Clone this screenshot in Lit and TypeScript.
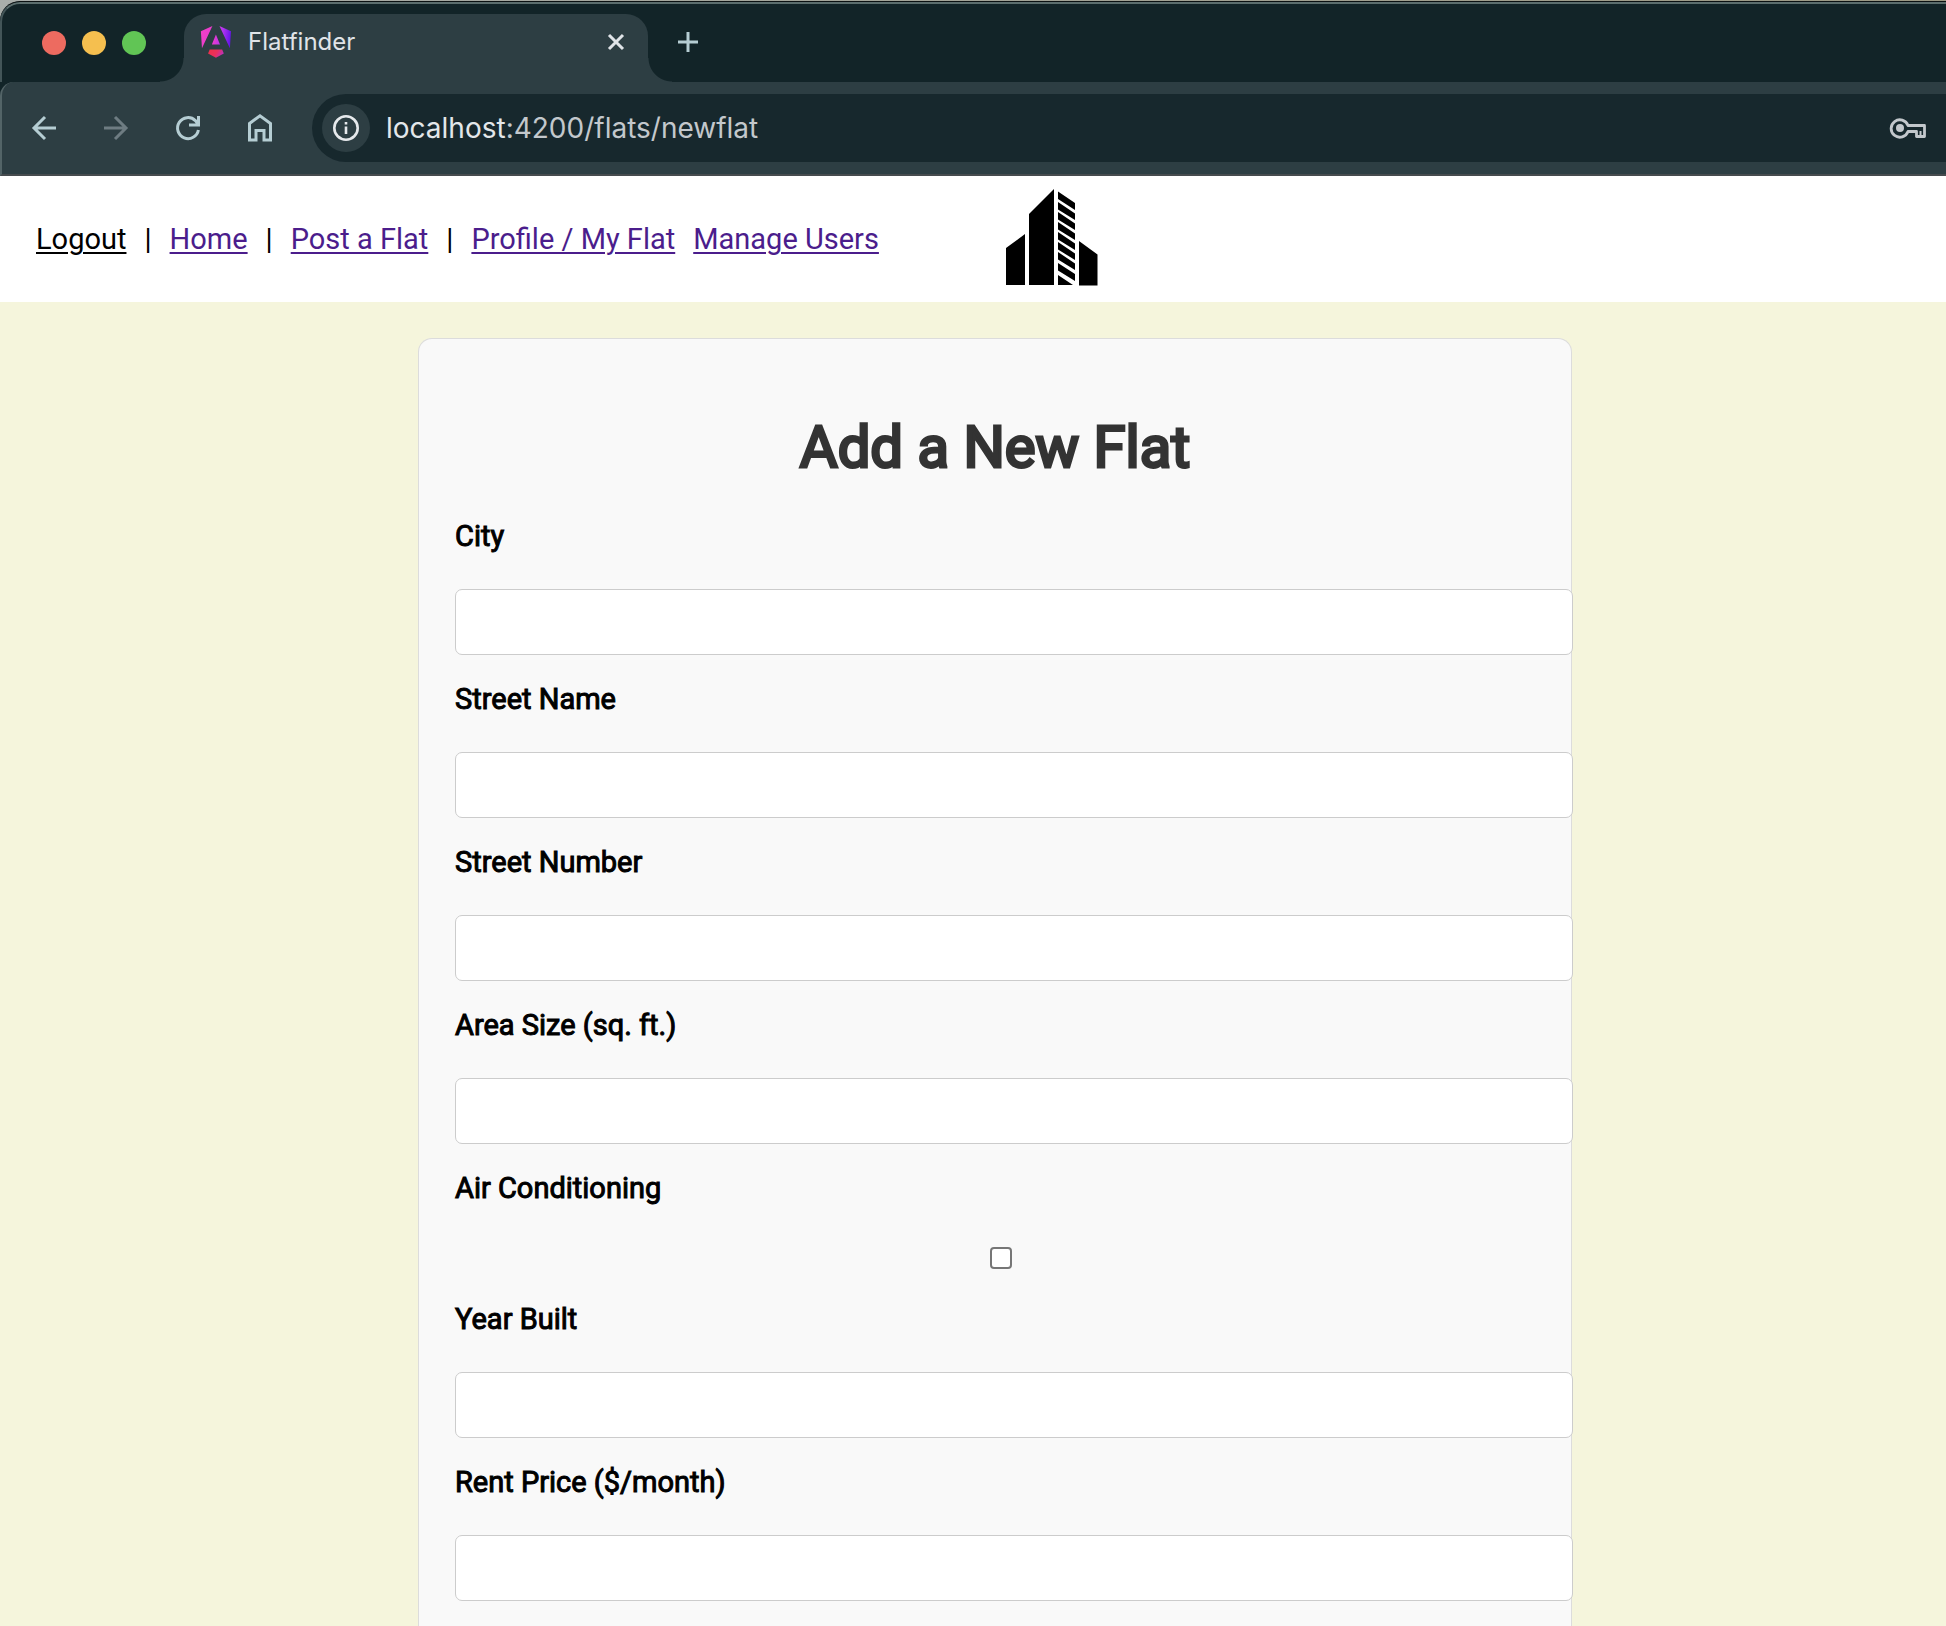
import { LitElement, html, css } from "lit";
import { customElement } from "lit/decorators.js";

@customElement("browser-chrome")
export class BrowserChrome extends LitElement {
  static styles = css`
    :host {
      display: block;
      font-family: Inter, "Liberation Sans", sans-serif;
      background: linear-gradient(90deg, #a9aeab, #9b9883);
      padding-top: 1px;
    }
    button {
      border: 0;
      padding: 0;
      background: none;
      color: inherit;
      font: inherit;
      display: flex;
      align-items: center;
      justify-content: center;
    }
    svg {
      display: block;
    }
    .frame {
      border-top: 1px solid #0b1112;
      border-radius: 20px 0 0 0;
      overflow: hidden;
      background: #122428;
    }
    .strip {
      box-sizing: border-box;
      height: 80px;
      border-top: 2px solid #5c6e6e;
      border-left: 2px solid #435558;
      border-radius: 20px 0 0 0;
      display: flex;
      padding-left: 40px;
    }
    .lights {
      display: flex;
      gap: 16px;
      align-items: center;
      height: 78px;
      margin-right: 38px;
    }
    .light {
      width: 24px;
      height: 24px;
      border-radius: 50%;
    }
    .close {
      background: #ed6b60;
    }
    .minimise {
      background: #f5bf4f;
    }
    .expand {
      background: #61c555;
    }
    .tab {
      position: relative;
      box-sizing: border-box;
      width: 464px;
      margin-top: 10px;
      padding: 0 20px 12px 16px;
      border-radius: 22px 22px 0 0;
      background: #2d3e43;
      color: #e0e4e8;
      display: flex;
      align-items: center;
    }
    .tab::before,
    .tab::after {
      content: "";
      position: absolute;
      bottom: 0;
      width: 24px;
      height: 24px;
    }
    .tab::before {
      right: 100%;
      background: radial-gradient(circle at 0 0, transparent 23px, #2d3e43 24px);
    }
    .tab::after {
      left: 100%;
      background: radial-gradient(circle at 100% 0, transparent 23px, #2d3e43 24px);
    }
    .title {
      flex: 1;
      font-size: 24px;
      line-height: 32px;
      margin-left: 16px;
    }
    .new-tab {
      width: 48px;
      height: 76px;
      margin-left: 16px;
      color: #b5cdd3;
    }
    .toolbar {
      box-sizing: border-box;
      height: 94px;
      display: flex;
      align-items: center;
      gap: 24px;
      background: #2d3e43;
      border-left: 2px solid #536467;
      border-bottom: 2px solid #464b4e;
      border-radius: 14px 0 0 0;
      padding-left: 18px;
      color: #b5cdd3;
    }
    .tool {
      width: 48px;
      height: 48px;
    }
    .muted {
      color: #6e7c82;
    }
    .address {
      flex: 1;
      box-sizing: border-box;
      height: 68px;
      margin-left: 4px;
      padding: 0 18px 0 10px;
      border-radius: 34px 0 0 34px;
      background: #17282d;
      display: flex;
      align-items: center;
      color: #c3c8cc;
    }
    .info {
      width: 48px;
      height: 48px;
      border-radius: 50%;
      background: #2d3e43;
      color: #e6e9ec;
    }
    .url {
      flex: 1;
      margin-left: 16px;
      font-size: 28px;
      line-height: 36px;
    }
    .host {
      color: #e3e7ea;
    }
  `;

  render() {
    return html`
      <div class="frame">
        <div class="strip">
          <div class="lights">
            <button class="light close" aria-label="Close window"></button>
            <button class="light minimise" aria-label="Minimise window"></button>
            <button class="light expand" aria-label="Expand window"></button>
          </div>
          <div class="tab">
            <svg width="32" height="32" viewBox="0 0 223 236" aria-hidden="true">
              <defs>
                <linearGradient id="a" x1="0" y1="0.3" x2="1" y2="0.4">
                  <stop offset="0" stop-color="#f040c8" />
                  <stop offset="0.45" stop-color="#e83ad0" />
                  <stop offset="0.7" stop-color="#b636ef" />
                  <stop offset="1" stop-color="#6414e8" />
                </linearGradient>
                <linearGradient id="b" x1="0" y1="0" x2="1" y2="0.3">
                  <stop offset="0" stop-color="#ee3048" />
                  <stop offset="0.6" stop-color="#e9305c" />
                  <stop offset="1" stop-color="#c030b8" />
                </linearGradient>
              </defs>
              <path
                fill="url(#a)"
                d="M222 39l-8 126L137 0l85 39zM111 63l30 73H81l30-73zM8 165L0 39 85 0 8 165z"
              />
              <path fill="url(#b)" d="M169 202l-58 33-58-33 12-29h92l12 29z" />
            </svg>
            <span class="title">Flatfinder</span>
            <button aria-label="Close tab">
              <svg width="24" height="24" viewBox="0 0 24 24" fill="none" stroke="currentColor" stroke-width="3">
                <path d="M5 5l14 14M19 5L5 19" />
              </svg>
            </button>
          </div>
          <button class="new-tab" aria-label="New tab">
            <svg width="24" height="24" viewBox="0 0 24 24" fill="none" stroke="currentColor" stroke-width="3">
              <path d="M12 2v20M2 12h20" />
            </svg>
          </button>
        </div>
        <div class="toolbar">
          <button class="tool" aria-label="Back">
            <svg width="28" height="28" viewBox="0 0 28 28" fill="none" stroke="currentColor" stroke-width="3">
              <path d="M26 14H4M15 3L4 14l11 11" />
            </svg>
          </button>
          <button class="tool muted" aria-label="Forward">
            <svg width="28" height="28" viewBox="0 0 28 28" fill="none" stroke="currentColor" stroke-width="3">
              <path d="M2 14h22M13 3l11 11-11 11" />
            </svg>
          </button>
          <button class="tool" aria-label="Reload">
            <svg width="28" height="28" viewBox="0 0 28 28" fill="none" stroke="currentColor" stroke-width="3">
              <path d="M24.400 16A10.500 10.500 0 1 1 21.400 6.600L24 10M24.500 2v9H15" />
            </svg>
          </button>
          <button class="tool" aria-label="Home">
            <svg width="28" height="30" viewBox="0 0 28 30" fill="none" stroke="currentColor" stroke-width="3">
              <path d="M3.500 10.500L14 2.800l10.500 7.700v16.500h-6.500v-9.500h-8v9.500H3.500z" />
            </svg>
          </button>
          <div class="address">
            <button class="info" aria-label="View site information">
              <svg width="28" height="28" viewBox="0 0 28 28" fill="none" stroke="currentColor" stroke-width="2.600">
                <circle cx="14" cy="14" r="11.700" />
                <path d="M14 12.500v7.500M14 8v2.600" />
              </svg>
            </button>
            <span class="url"><span class="host">localhost</span>:4200/flats/newflat</span>
            <button aria-label="Saved passwords">
              <svg width="40" height="24" viewBox="0 0 40 24" fill="none" stroke="currentColor" stroke-width="2.800" stroke-linejoin="round">
                <circle cx="12" cy="12" r="4" fill="currentColor" stroke="none" />
                <path d="M20 9.500h16.500v11H28.500v-5H20A8.700 8.700 0 1 1 20 9.500z" />
                <path d="M32.500 15v5.500" stroke-width="2" />
              </svg>
            </button>
          </div>
        </div>
      </div>
    `;
  }
}

@customElement("site-header")
export class SiteHeader extends LitElement {
  static styles = css`
    :host {
      display: flex;
      align-items: center;
      background: #fff;
      padding-left: 36px;
    }
    nav {
      display: flex;
      gap: 18px;
      font-size: 29px;
      line-height: 36px;
      color: #000;
    }
    a {
      color: #4b1d8c;
      text-decoration-thickness: 2px;
      text-underline-offset: 3px;
    }
    .logout {
      color: #000;
    }
    .logo {
      display: block;
      margin-left: 107px;
    }
  `;

  render() {
    return html`
      <nav>
        <a class="logout" href="#logout">Logout</a>
        <span>|</span>
        <a href="#home">Home</a>
        <span>|</span>
        <a href="#post">Post a Flat</a>
        <span>|</span>
        <a href="#profile">Profile / My Flat</a>
        <a href="#users">Manage Users</a>
      </nav>
      <svg class="logo" width="126" height="126" viewBox="0 0 126 126" role="img" aria-label="Flatfinder">
        <path d="M20 72L39 58V109H20zM43 38L68 13V109H43zM93 65L111.500 78.500V109.500H93z" />
        <path
          d="M72 15.500L89 27V34L72 23zM72 26L89 37.500V44L72 33.500zM72 36L89 47.500V54L72 43.500zM72 46L89 57.500V64L72 53.500zM72 56L89 67.500V74L72 63.500zM72 66L89 77.500V84L72 73.500zM72 76L89 87.500V94L72 83.500zM72 87L89 98V105L72 94.500zM72 99L87 109H72z"
        />
      </svg>
    `;
  }
}

interface Field {
  id: string;
  label: string;
  type: "text" | "number" | "checkbox";
}

const FIELDS: Field[] = [
  { id: "city", label: "City", type: "text" },
  { id: "street-name", label: "Street Name", type: "text" },
  { id: "street-number", label: "Street Number", type: "text" },
  { id: "area-size", label: "Area Size (sq. ft.)", type: "number" },
  { id: "air-conditioning", label: "Air Conditioning", type: "checkbox" },
  { id: "year-built", label: "Year Built", type: "number" },
  { id: "rent-price", label: "Rent Price ($/month)", type: "number" },
];

@customElement("flat-form")
export class FlatForm extends LitElement {
  static styles = css`
    :host {
      box-sizing: border-box;
      display: block;
      width: 100%;
      max-width: 1154px;
      padding: 72px 36px 0;
      background: #f9f9f9;
      border: 1px solid #dcdcdc;
      border-bottom: 0;
      border-radius: 14px 14px 0 0;
    }
    /* Headings and labels are the regular face, thickened by a stroke. */
    h1 {
      margin: 0 0 35px;
      text-align: center;
      font-size: 58px;
      line-height: 72px;
      font-weight: 400;
      -webkit-text-stroke: 3px #333;
      color: #333;
    }
    .field {
      display: flex;
      flex-direction: column;
      margin-bottom: 26px;
    }
    label {
      font-size: 29px;
      line-height: 36px;
      font-weight: 400;
      -webkit-text-stroke: 1px #000;
      color: #000;
      margin-bottom: 35px;
    }
    /* Text boxes run past the card's padding and over its right border. */
    .box {
      box-sizing: border-box;
      height: 66px;
      margin: 0 -38px 0 0;
      padding: 0 18px;
      border: 1px solid #ccc;
      border-radius: 7px;
      background: #fff;
      font: inherit;
      font-size: 24px;
      appearance: textfield;
    }
    .tick {
      appearance: none;
      box-sizing: border-box;
      align-self: center;
      width: 22px;
      height: 22px;
      margin: 6px 0 6px 12px;
      border: 2px solid #767676;
      border-radius: 4px;
      background: #fff;
    }
  `;

  render() {
    return html`
      <form>
        <h1>Add a New Flat</h1>
        ${FIELDS.map(
          (f) => html`
            <div class="field">
              <label for=${f.id}>${f.label}</label>
              <input class=${f.type === "checkbox" ? "tick" : "box"} id=${f.id} type=${f.type} />
            </div>
          `,
        )}
      </form>
    `;
  }
}

@customElement("app-root")
export class AppRoot extends LitElement {
  static styles = css`
    :host {
      display: flex;
      flex-direction: column;
      min-height: 100vh;
      font-family: Roboto, "Liberation Sans", sans-serif;
      background: #f5f5dc;
    }
    main {
      flex: 1;
      display: flex;
      justify-content: center;
      padding: 36px 0 0 44px;
    }
  `;

  render() {
    return html`
      <browser-chrome></browser-chrome>
      <site-header></site-header>
      <main><flat-form></flat-form></main>
    `;
  }
}
